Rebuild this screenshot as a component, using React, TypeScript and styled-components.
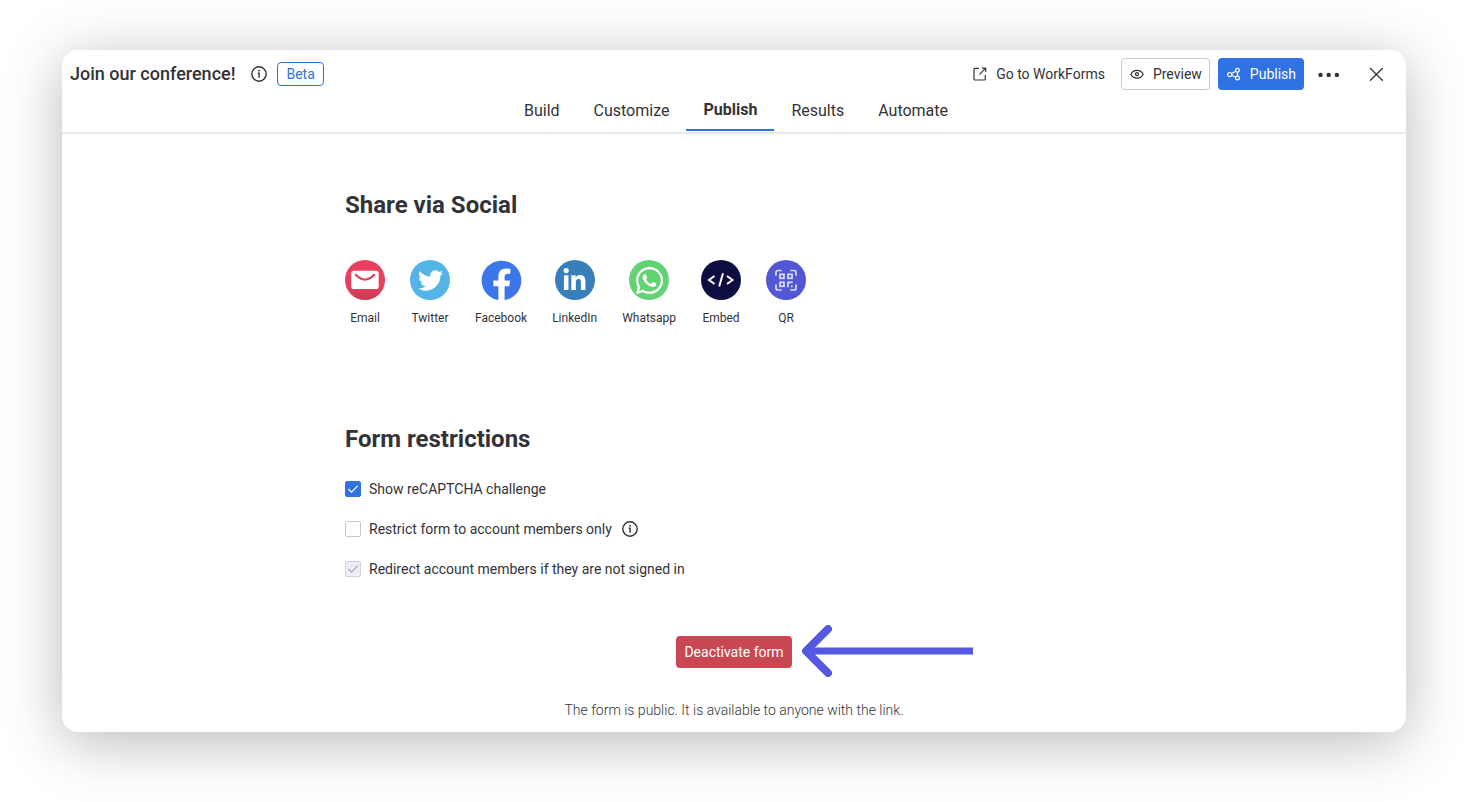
import React from "react";
import styled, { createGlobalStyle, css } from "styled-components";
import { FaFacebook, FaLinkedinIn, FaTwitter, FaWhatsapp } from "react-icons/fa";

const color = {
  text: "#323338",
  primary: "#2f72e4",
  border: "#c5c7d4",
  divider: "#e6e7ef",
  danger: "#c94753",
  accent: "#5559df",
};

const GlobalStyle = createGlobalStyle`
  *, *::before, *::after { box-sizing: border-box; }
  body {
    margin: 0;
    background: #fff;
    color: ${color.text};
    font-family: Roboto, "Liberation Sans", sans-serif;
    font-size: 14px;
    line-height: 20px;
  }
  button, input { font: inherit; color: inherit; }
`;

const Page = styled.div`
  min-height: 100vh;
  padding: 50px 58px 70px 62px;
`;

const Card = styled.div`
  border-radius: 16px;
  background: #fff;
  box-shadow: 0 10px 60px rgba(0, 0, 0, 0.28);
`;

const Header = styled.header`
  padding-top: 8px;
  border-bottom: 2px solid ${color.divider};
`;

const TopBar = styled.div`
  display: flex;
  align-items: center;
  justify-content: space-between;
  height: 32px;
  padding: 0 14px 0 8px;
`;

const TitleGroup = styled.div`
  display: flex;
  align-items: center;
`;

const Title = styled.h1`
  margin: 0 16px 0 0;
  font-size: 18px;
  line-height: 24px;
  font-weight: 500;
`;

const Badge = styled.span`
  margin-left: 10px;
  padding: 1px 8px;
  border: 1px solid ${color.primary};
  border-radius: 4px;
  color: ${color.primary};
  line-height: 20px;
`;

const Actions = styled.div`
  display: flex;
  align-items: center;
  gap: 8px;
`;

const actionStyle = css`
  display: flex;
  align-items: center;
  gap: 8px;
  height: 32px;
  padding: 0 7px;
  border: 1px solid transparent;
  border-radius: 4px;
  color: ${color.text};
  text-decoration: none;
  cursor: pointer;
`;

const ActionLink = styled.a`
  ${actionStyle}
`;

const ActionButton = styled.button<{ $kind: "outline" | "primary" | "danger" }>`
  ${actionStyle}
  ${({ $kind }) =>
    $kind === "outline"
      ? css`
          background: #fff;
          border-color: ${color.border};
        `
      : css`
          background: ${$kind === "primary" ? color.primary : color.danger};
          color: #fff;
        `}
`;

const IconButton = styled.button`
  display: flex;
  align-items: center;
  justify-content: center;
  width: 32px;
  height: 32px;
  padding: 0;
  border: 0;
  border-radius: 4px;
  background: none;
  cursor: pointer;

  & + & {
    margin-left: 8px;
  }
`;

const Tabs = styled.nav`
  display: flex;
  justify-content: center;
  height: 42px;
  padding-left: 4px;
`;

const Tab = styled.a<{ $active?: boolean }>`
  height: 41px;
  padding: ${({ $active }) => ($active ? "10px" : "11px")} 17px 0;
  border-bottom: 2px solid ${({ $active }) => ($active ? color.primary : "transparent")};
  color: ${color.text};
  font-size: 16px;
  font-weight: ${({ $active }) => ($active ? 700 : 400)};
  text-decoration: none;
`;

const Content = styled.main`
  max-width: 778px;
  margin: 0 auto;
  padding: 55px 0 12px;
`;

const SectionTitle = styled.h2`
  margin: 0;
  font-size: 24px;
  line-height: 32px;
  font-weight: 700;
`;

const SocialList = styled.div`
  display: flex;
  gap: 25px;
  margin: 39px 0 97px;
`;

const SocialButton = styled.button`
  display: flex;
  flex-direction: column;
  align-items: center;
  gap: 10px;
  min-width: 40px;
  padding: 0;
  border: 0;
  background: none;
  font-size: 12px;
  line-height: 16px;
  cursor: pointer;
`;

const Disc = styled.span<{ $fill: string }>`
  display: flex;
  align-items: center;
  justify-content: center;
  width: 40px;
  height: 40px;
  border-radius: 50%;
  background: ${({ $fill }) => $fill};
  color: #fff;

  & > svg {
    flex: none;
  }
`;

const Options = styled.div`
  display: flex;
  flex-direction: column;
  gap: 20px;
  margin: 24px 0 57px;
`;

const Option = styled.div`
  display: flex;
  align-items: center;
  gap: 10px;
`;

const OptionLabel = styled.label`
  display: flex;
  align-items: center;
  gap: 8px;
`;

const CheckWrap = styled.span`
  display: grid;

  & > * {
    grid-area: 1 / 1;
  }

  & > svg {
    color: #fff;
    pointer-events: none;
  }

  & > input:disabled + svg {
    color: #a3a5b0;
  }
`;

const CheckInput = styled.input`
  appearance: none;
  width: 16px;
  height: 16px;
  margin: 0;
  border: 1px solid ${color.border};
  border-radius: 2px;
  background: #fff;

  &:checked {
    border-color: ${color.primary};
    background: ${color.primary};
  }

  &:disabled {
    border-color: #d0d2de;
    background: #ecedf5;
  }
`;

const FormStatus = styled.div`
  display: flex;
  flex-direction: column;
  align-items: center;
  gap: 32px;
`;

const Pointed = styled.div`
  position: relative;
`;

const Arrow = styled.svg`
  position: absolute;
  left: 100%;
  top: 50%;
  margin: -27px 0 0 8px;
`;

const StatusText = styled.p`
  margin: 0;
  font-weight: 300;
`;

const InfoIcon = () => (
  <svg width="16" height="16" viewBox="0 0 16 16" fill="none" stroke="currentColor" strokeWidth="1.4" aria-hidden="true">
    <circle cx="8" cy="8" r="7.2" />
    <path d="M6.8 7.2H8.1V11.8" />
    <circle cx="8" cy="4.7" r="0.9" fill="currentColor" stroke="none" />
  </svg>
);

const ExternalIcon = () => (
  <svg width="16" height="16" viewBox="0 0 16 16" fill="none" stroke="currentColor" strokeWidth="1.2" strokeLinejoin="round" aria-hidden="true">
    <path d="M7 2.4H2.8a.8.8 0 0 0-.8.8V13.200a.8.8 0 0 0 .8.8H12.500a.8.8 0 0 0 .8-.8V9" />
    <path d="M9.800 2.200H13.700V6.100M13.700 2.200L7.500 8.400" />
  </svg>
);

const EyeIcon = () => (
  <svg width="16" height="16" viewBox="0 0 16 16" fill="none" stroke="currentColor" strokeWidth="1.2" aria-hidden="true">
    <path d="M1.800 8.200C4.400 3 11.600 3 14.200 8.200C11.600 13.400 4.400 13.400 1.800 8.200Z" strokeLinejoin="round" />
    <circle cx="8" cy="8.200" r="1.500" />
  </svg>
);

const ShareIcon = () => (
  <svg width="16" height="16" viewBox="0 0 16 16" fill="none" stroke="currentColor" strokeWidth="1.200" aria-hidden="true">
    <circle cx="3.700" cy="8.600" r="2.100" />
    <circle cx="11.500" cy="4.200" r="1.900" />
    <circle cx="11.500" cy="12" r="1.900" />
    <path d="M5.600 7.600L9.800 5.200M5.700 9.300L9.700 11.300M11.500 6.100V10.100" />
  </svg>
);

const MoreIcon = () => (
  <svg width="24" height="6" viewBox="0 0 24 6" fill="currentColor" aria-hidden="true">
    <circle cx="4.500" cy="4" r="2.200" />
    <circle cx="12.700" cy="4" r="2.200" />
    <circle cx="20.900" cy="4" r="2.200" />
  </svg>
);

const CloseIcon = () => (
  <svg width="14" height="14" viewBox="0 0 14 14" fill="none" stroke="currentColor" strokeWidth="1.300" strokeLinecap="round" aria-hidden="true">
    <path d="M1.500 1.500L13.300 13.300M13.300 1.500L1.500 13.300" />
  </svg>
);

const CheckIcon = () => (
  <svg width="16" height="16" viewBox="0 0 16 16" fill="none" stroke="currentColor" strokeWidth="1.200" strokeLinecap="round" strokeLinejoin="round" aria-hidden="true">
    <path d="M3.600 8.300L6.600 11.200L12.400 5.200" />
  </svg>
);

const MailIcon = () => (
  <svg width="40" height="40" viewBox="0 0 40 40" fill="none" aria-hidden="true">
    <rect x="6.300" y="10.700" width="27.400" height="18.300" rx="2.600" fill="#fff" />
    <path d="M10.800 14.800Q20 24.400 29.200 14.800" stroke="#df3d5b" strokeWidth="2.200" strokeLinecap="round" />
  </svg>
);

const EmbedIcon = () => (
  <svg width="40" height="40" viewBox="0 0 40 40" fill="none" stroke="currentColor" strokeWidth="2" aria-hidden="true">
    <path d="M13.500 16L8 20L13.500 24M26 16L31.500 20L26 24M22 13.200L18.200 26.500" />
  </svg>
);

const QrIcon = () => (
  <svg width="40" height="40" viewBox="0 0 40 40" fill="none" stroke="#dcdcf9" strokeWidth="1.700" aria-hidden="true">
    <path
      strokeLinecap="round"
      d="M10 15V12.500Q10 10.500 12 10.500H15M25 10.500H28Q30 10.500 30 12.500V15M30 25V28Q30 30 28 30H25M15 30H12Q10 30 10 28V25"
    />
    <rect x="14" y="14.300" width="4" height="4" />
    <rect x="22" y="14.300" width="4" height="4" />
    <rect x="14" y="22.300" width="4" height="4" />
    <path d="M22 27.200V22.300H26.700M25 26.300H26.700" />
  </svg>
);

const socials = [
  { label: "Email", fill: "linear-gradient(#ea4060 60%, #c93a55)", icon: <MailIcon /> },
  { label: "Twitter", fill: "#55b4e7", icon: <FaTwitter size={25} /> },
  { label: "Facebook", fill: "#fff", icon: <FaFacebook size={41} color="#3b77eb" /> },
  { label: "LinkedIn", fill: "#367fbb", icon: <FaLinkedinIn size={25} /> },
  { label: "Whatsapp", fill: "#62d273", icon: <FaWhatsapp size={31} /> },
  { label: "Embed", fill: "#0e0d42", icon: <EmbedIcon /> },
  { label: "QR", fill: "#5257d6", icon: <QrIcon /> },
];

const tabs = ["Build", "Customize", "Publish", "Results", "Automate"];

type CheckboxProps = {
  id: string;
  label: string;
  checked?: boolean;
  disabled?: boolean;
  children?: React.ReactNode;
};

const Checkbox = ({ id, label, checked, disabled, children }: CheckboxProps) => (
  <Option>
    <OptionLabel htmlFor={id}>
      <CheckWrap>
        <CheckInput id={id} type="checkbox" defaultChecked={checked} disabled={disabled} />
        <CheckIcon />
      </CheckWrap>
      {label}
    </OptionLabel>
    {children}
  </Option>
);

export default function App() {
  return (
    <Page>
      <GlobalStyle />
      <Card>
        <Header>
          <TopBar>
            <TitleGroup>
              <Title>Join our conference!</Title>
              <InfoIcon />
              <Badge>Beta</Badge>
            </TitleGroup>
            <Actions>
              <ActionLink href="#workforms">
                <ExternalIcon />
                Go to WorkForms
              </ActionLink>
              <ActionButton type="button" $kind="outline">
                <EyeIcon />
                Preview
              </ActionButton>
              <ActionButton type="button" $kind="primary">
                <ShareIcon />
                Publish
              </ActionButton>
              <IconButton type="button" aria-label="More options">
                <MoreIcon />
              </IconButton>
              <IconButton type="button" aria-label="Close">
                <CloseIcon />
              </IconButton>
            </Actions>
          </TopBar>
          <Tabs>
            {tabs.map((tab) => (
              <Tab key={tab} href={`#${tab.toLowerCase()}`} $active={tab === "Publish"}>
                {tab}
              </Tab>
            ))}
          </Tabs>
        </Header>
        <Content>
          <SectionTitle>Share via Social</SectionTitle>
          <SocialList>
            {socials.map(({ label, fill, icon }) => (
              <SocialButton key={label} type="button">
                <Disc $fill={fill}>{icon}</Disc>
                {label}
              </SocialButton>
            ))}
          </SocialList>
          <SectionTitle>Form restrictions</SectionTitle>
          <Options>
            <Checkbox id="captcha" label="Show reCAPTCHA challenge" checked />
            <Checkbox id="members" label="Restrict form to account members only">
              <InfoIcon />
            </Checkbox>
            <Checkbox id="redirect" label="Redirect account members if they are not signed in" checked disabled />
          </Options>
          <FormStatus>
            <Pointed>
              <ActionButton type="button" $kind="danger">
                Deactivate form
              </ActionButton>
              <Arrow width="174" height="52" viewBox="0 0 174 52" fill="none" stroke={color.accent} strokeWidth="7" aria-hidden="true">
                <path d="M7 26H173" />
                <path d="M28 4L6 26L28 48" strokeWidth="8" strokeLinecap="round" strokeLinejoin="round" />
              </Arrow>
            </Pointed>
            <StatusText>The form is public. It is available to anyone with the link.</StatusText>
          </FormStatus>
        </Content>
      </Card>
    </Page>
  );
}
